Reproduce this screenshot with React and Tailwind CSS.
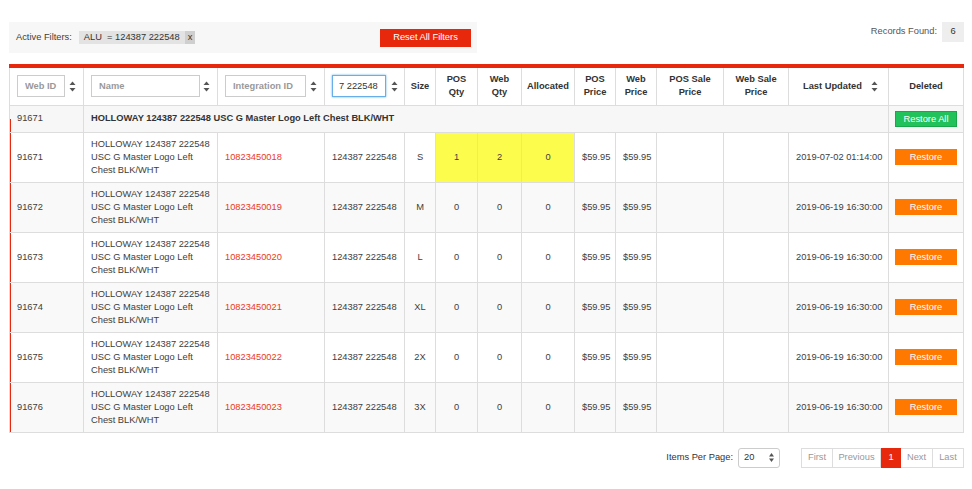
import React from "react";

const rows = [
  { id: "91671", integ: "10823450018", size: "S", pos: "1", web: "2", alloc: "0", date: "2019-07-02 01:14:00", hl: true },
  { id: "91672", integ: "10823450019", size: "M", pos: "0", web: "0", alloc: "0", date: "2019-06-19 16:30:00" },
  { id: "91673", integ: "10823450020", size: "L", pos: "0", web: "0", alloc: "0", date: "2019-06-19 16:30:00" },
  { id: "91674", integ: "10823450021", size: "XL", pos: "0", web: "0", alloc: "0", date: "2019-06-19 16:30:00" },
  { id: "91675", integ: "10823450022", size: "2X", pos: "0", web: "0", alloc: "0", date: "2019-06-19 16:30:00" },
  { id: "91676", integ: "10823450023", size: "3X", pos: "0", web: "0", alloc: "0", date: "2019-06-19 16:30:00" },
];

const widths = [74, 134, 107, 80, 31, 42, 44, 53, 41, 41, 67, 65, 100, 75];

const SortIcon = () => (
  <svg width="7" height="11" viewBox="0 0 7 11" className="shrink-0">
    <path d="M3.5 0.5 L6.5 4 L0.5 4 Z" fill="#555" />
    <path d="M3.5 10.5 L6.5 7 L0.5 7 Z" fill="#555" />
  </svg>
);

const FilterInput = ({ placeholder, width }) => (
  <input
    placeholder={placeholder}
    className="h-[22px] border border-[#ccc] bg-white px-[7px] text-[9.3px] text-[#444] placeholder:text-[#999] outline-none"
    style={{ width }}
  />
);

const App = () => {
  return (
    <div
      className="w-[972px] h-[489px] bg-white text-[#3d3d3d] text-[9.3px]"
      style={{ fontFamily: '"Liberation Sans", Arial, sans-serif' }}
    >
      <div className="pl-[9px] pr-[8px] pt-[22px]">
        {/* Filter bar */}
        <div className="flex justify-between items-start">
          <div className="w-[468px] h-[31px] bg-[#f7f7f7] flex items-center pl-[7px] pr-[6px]">
            <span>Active Filters:</span>
            <span className="ml-[7px] flex items-stretch h-[13px] bg-[#e3e3e3] text-[#333] leading-[13px]">
              <span className="px-[5px]">ALU &nbsp;= 124387 222548</span>
              <span className="bg-[#cfcfcf] px-[3px]">x</span>
            </span>
            <button className="ml-auto h-[18px] w-[91px] bg-[#e8280c] text-white text-[9.3px]">
              Reset All Filters
            </button>
          </div>
          <div className="flex items-center">
            <span className="text-[#555] mr-[5px]">Records Found:</span>
            <span className="w-[22px] h-[20px] bg-[#eee] flex items-center justify-center text-[#333]">6</span>
          </div>
        </div>

        {/* Table */}
        <table className="mt-[11px] table-fixed border-collapse w-[955px] border-t-[4px] border-t-[#e8280c]">
          <colgroup>
            {widths.map((w, i) => (
              <col key={i} style={{ width: w }} />
            ))}
          </colgroup>
          <thead>
            <tr className="h-[39px] text-[#333] font-bold leading-[13px]">
              <th className="border-x border-b border-[#ddd] px-[7px]">
                <div className="flex items-center justify-between">
                  <FilterInput placeholder="Web ID" width={48} />
                  <SortIcon />
                </div>
              </th>
              <th className="border border-t-0 border-[#ddd] px-[7px]">
                <div className="flex items-center justify-between">
                  <FilterInput placeholder="Name" width={109} />
                  <SortIcon />
                </div>
              </th>
              <th className="border border-t-0 border-[#ddd] px-[7px]">
                <div className="flex items-center justify-between">
                  <FilterInput placeholder="Integration ID" width={81} />
                  <SortIcon />
                </div>
              </th>
              <th className="border border-t-0 border-[#ddd] pl-[7px] pr-[6px]">
                <div className="flex items-center justify-between">
                  <div className="h-[22px] w-[54px] border border-[#66afe9] shadow-[0_0_2px_#66afe9] bg-white flex items-center pl-[6px] font-normal text-[#333] whitespace-nowrap">
                    7 222548
                  </div>
                  <SortIcon />
                </div>
              </th>
              <th className="border border-t-0 border-[#ddd]">Size</th>
              <th className="border border-t-0 border-[#ddd]">POS<br />Qty</th>
              <th className="border border-t-0 border-[#ddd]">Web<br />Qty</th>
              <th className="border border-t-0 border-[#ddd]">Allocated</th>
              <th className="border border-t-0 border-[#ddd]">POS<br />Price</th>
              <th className="border border-t-0 border-[#ddd]">Web<br />Price</th>
              <th className="border border-t-0 border-[#ddd]">POS Sale<br />Price</th>
              <th className="border border-t-0 border-[#ddd]">Web Sale<br />Price</th>
              <th className="border border-t-0 border-[#ddd] pl-[14px] pr-[10px]">
                <div className="flex items-center justify-between">
                  <span>Last Updated</span>
                  <SortIcon />
                </div>
              </th>
              <th className="border border-t-0 border-[#ddd]">Deleted</th>
            </tr>
          </thead>
          <tbody>
            <tr className="h-[27px] bg-[#f7f7f7]">
              <td className="relative border border-[#ddd] px-[7px]">
                <span className="absolute left-0 top-[13px] bottom-0 w-px bg-[#e8280c]" />
                91671
              </td>
              <td colSpan={12} className="border border-[#ddd] px-[7px] font-bold text-[#333]">
                HOLLOWAY 124387 222548 USC G Master Logo Left Chest BLK/WHT
              </td>
              <td className="border border-[#ddd] text-center">
                <button className="w-[62px] h-[16px] bg-[#21c25b] border border-[#18a84a] text-white text-[9.3px] leading-[14px]">
                  Restore All
                </button>
              </td>
            </tr>
            {rows.map((r, i) => {
              const bg = i % 2 === 1 ? "bg-[#f9f9f9]" : "bg-white";
              const yl = r.hl ? "bg-[#fcfc4c]" : "";
              return (
                <tr key={r.id} className={`h-[50px] leading-[13px] ${bg}`}>
                  <td className="relative border border-[#ddd] px-[7px]">
                    <span className="absolute left-0 top-0 bottom-0 w-px bg-[#e8280c]" />
                    {r.id}
                  </td>
                  <td className="border border-[#ddd] px-[7px]">
                    HOLLOWAY 124387 222548 USC G Master Logo Left Chest BLK/WHT
                  </td>
                  <td className="border border-[#ddd] px-[7px] text-[#ea3a1c]">{r.integ}</td>
                  <td className="border border-[#ddd] px-[7px]">124387 222548</td>
                  <td className="border border-[#ddd] text-center">{r.size}</td>
                  <td className={`border border-[#ddd] text-center ${yl}`}>{r.pos}</td>
                  <td className={`border border-[#ddd] text-center ${yl}`}>{r.web}</td>
                  <td className={`border border-[#ddd] text-center ${yl}`}>{r.alloc}</td>
                  <td className="border border-[#ddd] px-[7px]">$59.95</td>
                  <td className="border border-[#ddd] px-[7px]">$59.95</td>
                  <td className="border border-[#ddd]"></td>
                  <td className="border border-[#ddd]"></td>
                  <td className="border border-[#ddd] px-[7px] whitespace-nowrap">{r.date}</td>
                  <td className="border border-[#ddd] text-center">
                    <button className="w-[62px] h-[16px] bg-[#ff7800] text-white text-[9.3px] leading-[16px]">
                      Restore
                    </button>
                  </td>
                </tr>
              );
            })}
          </tbody>
        </table>

        {/* Pagination */}
        <div className="mt-[15px] flex items-center justify-end">
          <span className="text-[#333] mr-[5px]">Items Per Page:</span>
          <div className="w-[42px] h-[20px] border border-[#ccc] rounded-[3px] flex items-center justify-between px-[5px] text-[#333]">
            <span>20</span>
            <svg width="5" height="9" viewBox="0 0 5 9">
              <path d="M2.5 0 L5 3.5 L0 3.5 Z" fill="#555" />
              <path d="M2.5 9 L5 5.5 L0 5.5 Z" fill="#555" />
            </svg>
          </div>
          <div className="ml-[21px] flex h-[20px] text-[#999]">
            <span className="w-[32px] border border-[#ddd] flex items-center justify-center">First</span>
            <span className="w-[48px] border border-l-0 border-[#ddd] flex items-center justify-center">Previous</span>
            <span className="w-[20px] bg-[#e8280c] text-white flex items-center justify-center">1</span>
            <span className="w-[32px] border border-l-0 border-[#ddd] flex items-center justify-center">Next</span>
            <span className="w-[31px] border border-l-0 border-[#ddd] flex items-center justify-center">Last</span>
          </div>
        </div>
      </div>
    </div>
  );
};

export default App;
